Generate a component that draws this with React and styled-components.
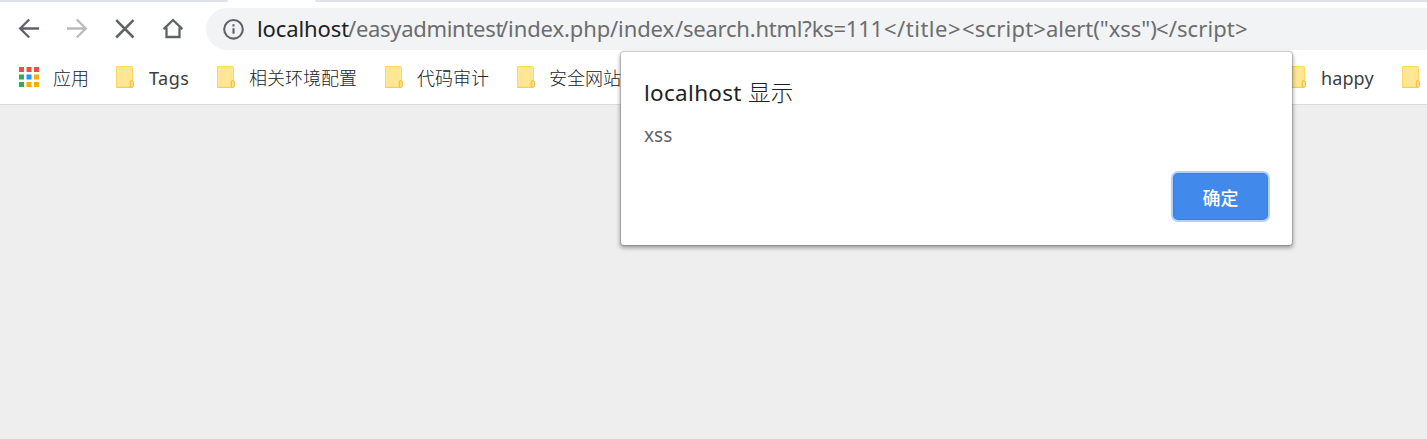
import React from "react";
import styled, { createGlobalStyle } from "styled-components";

const GlobalStyle = createGlobalStyle`
  * { box-sizing: border-box; }
  body {
    margin: 0;
    background: #eeeeee;
    font-family: "Noto Sans", "Noto Sans CJK SC", sans-serif;
    overflow: hidden;
  }
`;

const Browser = styled.div`
  position: relative;
  height: 439px;
  overflow: hidden;
  background: #eeeeee;
`;

const TabStrip = styled.div`
  display: flex;
  justify-content: space-between;
  height: 2px;
  background: #ffffff;
`;

const StripPart = styled.div`
  width: ${(p) => p.$width};
  background: #dee1e6;
  border-radius: ${(p) => (p.$end ? "0 0 0 3px" : "0 0 3px 0")};
`;

const Toolbar = styled.div`
  display: flex;
  align-items: center;
  height: 54px;
  padding-left: 17px;
  background: #ffffff;
`;

const NavButton = styled.div`
  display: flex;
  flex: none;
  width: 48px;
  height: 24px;
  color: ${(p) => (p.$disabled ? "#bababa" : "#5f6368")};
`;

const AddressBar = styled.div`
  display: flex;
  align-items: center;
  flex: 1;
  height: 42px;
  margin: 0 -30px 0 -3px;
  padding-left: 16px;
  border-radius: 21px;
  background: #f1f3f4;
  color: #5f6368;
`;

const Url = styled.div`
  display: flex;
  margin: 0 0 2px 11px;
  font-size: 22px;
  line-height: 30px;
  white-space: pre;
`;

const UrlPart = styled.span`
  flex: none;
  width: ${(p) => p.$width}px;
  letter-spacing: ${(p) => p.$spacing || 0}px;
  color: ${(p) => (p.$host ? "#202124" : "#6b6d70")};
`;

const BookmarkBar = styled.div`
  display: flex;
  align-items: center;
  gap: 28px;
  height: 49px;
  padding: 0 0 6px 19px;
  border-bottom: 1px solid #d9dbdd;
  background: #ffffff;
`;

const Bookmark = styled.div`
  display: flex;
  flex: none;
  align-items: center;
  gap: ${(p) => (p.$cjk ? 14 : 15)}px;
  width: ${(p) => p.$width}px;
  height: 24px;
  margin-right: ${(p) => p.$after || 0}px;
  color: #3c4043;
  font-size: 18px;
  line-height: 24px;
  white-space: nowrap;

  svg { flex: none; }
`;

const Label = styled.span`
  padding-top: 2px;
  color: ${(p) => (p.$cjk ? "#202326" : "inherit")};
  font-weight: ${(p) => (p.$cjk ? 300 : 400)};
  letter-spacing: ${(p) => p.$spacing || 0}px;
`;

const Dialog = styled.div`
  position: absolute;
  top: 52px;
  left: 621px;
  display: flex;
  flex-direction: column;
  width: 671px;
  height: 193px;
  padding: 24px 22px 23px 23px;
  border-radius: 3px;
  background: #ffffff;
  box-shadow: 0 0 1px 1px rgba(0, 0, 0, 0.14), 0 2px 4px 1px rgba(0, 0, 0, 0.34);
`;

const DialogTitle = styled.div`
  height: 34px;
  color: #202124;
  font-size: 22.5px;
  line-height: 34px;
  letter-spacing: 0.3px;
`;

const Light = styled.span`
  font-weight: 300;
`;

const DialogMessage = styled.div`
  margin-top: 11px;
  height: 28px;
  color: #5f6368;
  font-size: 19px;
  line-height: 28px;
`;

const ConfirmButton = styled.button`
  align-self: flex-end;
  width: 99px;
  height: 51px;
  margin-top: auto;
  padding: 1px 0 0;
  border: 2px solid #b4d1f8;
  border-radius: 7px;
  background: #4189ea;
  box-shadow: inset 0 0 0 1px #3880e6;
  color: #ffffff;
  font-family: inherit;
  font-size: 18px;
  font-weight: 500;
`;

const StrokeIcon = ({ children, weight = 2.3 }) => (
  <svg width="24" height="24" viewBox="0 0 24 24" fill="none" stroke="currentColor" strokeWidth={weight}>
    {children}
  </svg>
);

const FolderIcon = () => (
  <svg width="18" height="22" viewBox="0 0 18 22">
    <path d="M.5.5h15.2q.8 0 .8.8v13.2h-2.2v7H.5z" fill="#ffe694" stroke="#ffd95c" />
    <path d="M.5 21.3h16" stroke="#f5cd50" />
    <path d="M14.3 21.2v-5q0-1.6 1.6-1.6t1.6 1.6v3.5q0 1.5-1.6 1.5z" fill="#ffe287" stroke="#ebc03c" />
  </svg>
);

const dots = [
  ["#f94b41", "#f94b41", "#f94b41"],
  ["#35a85a", "#2196f3", "#faab13"],
  ["#35a85a", "#faab13", "#faab13"],
];

const AppsIcon = () => (
  <svg width="20" height="20" viewBox="0 0 20 20">
    {dots.map((row, y) =>
      row.map((fill, x) => (
        <rect key={`${x}${y}`} x={x * 7.5} y={y * 7.5} width="5" height="5" fill={fill} />
      ))
    )}
  </svg>
);

const bookmarks = [
  { name: "Tags", width: 73, spacing: 0.5 },
  { name: "相关环境配置", width: 140, cjk: true },
  { name: "代码审计", width: 104, cjk: true },
  { name: "安全网站", width: 104, after: 639, cjk: true },
  { name: "happy", width: 86, spacing: 0.1 },
  { name: "", width: 33 },
];

const urlParts = [
  { text: "localhost", width: 91, host: true, spacing: -0.1 },
  { text: "/easyadmintest", width: 152, spacing: -0.3 },
  { text: "/index.php", width: 110, spacing: -0.1 },
  { text: "/index", width: 65, spacing: -0.1 },
  { text: "/search.html?ks=111", width: 209, spacing: -0.22 },
  { text: "</title>", width: 78, spacing: 0.5 },
  { text: "<script>", width: 84, spacing: 0.2 },
  { text: 'alert("xss")', width: 110, spacing: -0.05 },
  { text: "</script>", width: 94, spacing: 0.1 },
];

export default function App() {
  return (
    <Browser>
      <GlobalStyle />
      <TabStrip>
        <StripPart $width="228px" />
        <StripPart $width="calc(100% - 315px)" $end />
      </TabStrip>
      <Toolbar>
        <NavButton>
          <StrokeIcon><path d="M22 11.5H3.2M12.2 2.5l-9 9 9 9" /></StrokeIcon>
        </NavButton>
        <NavButton $disabled>
          <StrokeIcon><path d="M2 11.5h18.8M11.8 2.5l9 9-9 9" /></StrokeIcon>
        </NavButton>
        <NavButton>
          <StrokeIcon weight={2.5}><path d="m3.2 3.2 17.3 17.3m0-17.3L3.2 20.5" /></StrokeIcon>
        </NavButton>
        <NavButton>
          <StrokeIcon><path d="M2.6 12.1 12 3l9.4 9.1M5.5 10.5V20h13v-9.5" /></StrokeIcon>
        </NavButton>
        <AddressBar>
          <StrokeIcon weight={2.1}>
            <circle cx="11.5" cy="12.3" r="9.3" />
            <path d="M11.5 11.3v5.5M11.5 7.2v2.3" />
          </StrokeIcon>
          <Url>
            {urlParts.map((part) => (
              <UrlPart key={part.text} $width={part.width} $host={part.host} $spacing={part.spacing}>
                {part.text}
              </UrlPart>
            ))}
          </Url>
        </AddressBar>
      </Toolbar>
      <BookmarkBar>
        <Bookmark $cjk $width={69}>
          <AppsIcon />
          <Label $cjk>应用</Label>
        </Bookmark>
        {bookmarks.map((item) => (
          <Bookmark key={item.name} $width={item.width} $after={item.after} $cjk={item.cjk}>
            <FolderIcon />
            <Label $cjk={item.cjk} $spacing={item.spacing}>{item.name}</Label>
          </Bookmark>
        ))}
      </BookmarkBar>
      <Dialog role="alertdialog">
        <DialogTitle>localhost <Light>显示</Light></DialogTitle>
        <DialogMessage>xss</DialogMessage>
        <ConfirmButton>确定</ConfirmButton>
      </Dialog>
    </Browser>
  );
}
